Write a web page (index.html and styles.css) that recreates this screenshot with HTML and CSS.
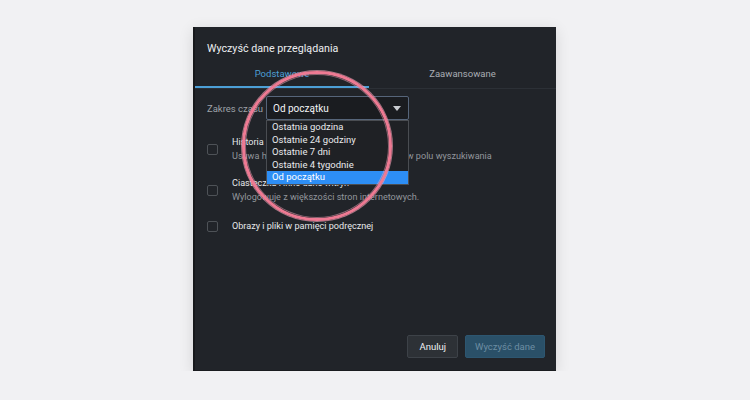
FILE: index.html
```html
<!DOCTYPE html>
<html lang="pl">
<head>
    <meta charset="UTF-8">
    <title>Wyczyść dane przeglądania</title>
    <link rel="stylesheet" href="styles.css">
</head>
<body>
<main class="scena">
    <section class="dialog">
        <h2 class="dialog-tytul">Wyczyść dane przeglądania</h2>
        <nav class="zakladki">
            <span class="zakladka aktywna">Podstawowe</span>
            <span class="zakladka">Zaawansowane</span>
        </nav>
        <div class="tresc">
            <div class="zakres">
                <span class="zakres-etykieta">Zakres czasu</span>
                <div class="wybor">
                    <div class="wybor-pole">
                        <span>Od początku</span>
                        <svg class="strzalka" width="8" height="5" viewBox="0 0 8 5"><path d="M0 0h8L4 5z" fill="#c9ccd1"/></svg>
                    </div>
                    <ul class="lista">
                        <li>Ostatnia godzina</li>
                        <li>Ostatnie 24 godziny</li>
                        <li>Ostatnie 7 dni</li>
                        <li>Ostatnie 4 tygodnie</li>
                        <li class="wybrany">Od początku</li>
                    </ul>
                </div>
            </div>
            <div class="opcja">
                <span class="pole"></span>
                <div>
                    <div class="opcja-nazwa">Historia przeglądania</div>
                    <div class="opcja-opis">Usuwa historię i autouzupełnienia adresów w polu wyszukiwania</div>
                </div>
            </div>
            <div class="opcja">
                <span class="pole"></span>
                <div>
                    <div class="opcja-nazwa">Ciasteczka i inne dane witryn</div>
                    <div class="opcja-opis">Wylogowuje z większości stron internetowych.</div>
                </div>
            </div>
            <div class="opcja ostatnia">
                <span class="pole"></span>
                <div>
                    <div class="opcja-nazwa">Obrazy i pliki w pamięci podręcznej</div>
                </div>
            </div>
        </div>
        <div class="przyciski">
            <button class="przycisk">Anuluj</button>
            <button class="przycisk glowny">Wyczyść dane</button>
        </div>
        <div class="kolko"></div>
    </section>
</main>
</body>
</html>
```

FILE: styles.css
```css
body{
    background-color: #f1f1f3;
    margin: 0;
    font-family: Roboto, "Noto Sans", sans-serif;
}
.scena{
    display: flex;
    padding: 27px 0 0 193px;
}
.dialog{
    position: relative;
    width: 363px;
    height: 344px;
    box-sizing: border-box;
    background-color: #212429;
    border-left: 2px solid #17191c;
    border-bottom: 1px solid #1a1c1f;
    box-shadow: 0 3px 14px rgba(0, 0, 0, .12);
    display: flex;
    flex-direction: column;
}
.dialog-tytul{
    margin: 0;
    padding: 15px 0 0 12px;
    height: 34px;
    box-sizing: border-box;
    font-size: 10.7px;
    font-weight: normal;
    color: #eceef0;
}
.zakladki{
    display: flex;
    border-bottom: 1px solid #2c3036;
}
.zakladka{
    flex: 1;
    text-align: center;
    font-size: 9.5px;
    color: #a9adb3;
    padding: 7px 0 7px;
    border-bottom: 2px solid transparent;
}
.zakladka.aktywna{
    flex: 0 0 174px;
    color: #4c9fd6;
    border-bottom-color: #4c9fd6;
}
.tresc{
    padding: 7px 12px 0;
    flex: 1;
}
.zakres{
    display: flex;
    align-items: center;
    font-size: 9.5px;
}
.zakres-etykieta{
    width: 59px;
    color: #9ea2a8;
}
.wybor{
    position: relative;
}
.wybor-pole{
    width: 143px;
    height: 24px;
    box-sizing: border-box;
    border: 1px solid #56657a;
    border-radius: 2px;
    background-color: #1a1c20;
    color: #f2f3f5;
    display: flex;
    align-items: center;
    justify-content: space-between;
    padding: 0 7px 0 6px;
    font-size: 10px;
}
.lista{
    position: absolute;
    top: 24px;
    left: 0;
    width: 143px;
    box-sizing: border-box;
    margin: 0;
    padding: 0;
    list-style: none;
    background-color: #1f2125;
    border: 1px solid #4a4d52;
    z-index: 2;
}
.lista li{
    height: 12.6px;
    line-height: 12.6px;
    padding-left: 5px;
    font-size: 9.5px;
    color: #e9eaec;
}
.lista li.wybrany{
    background-color: #2d8ef5;
    color: #ffffff;
}
.opcja{
    display: flex;
    align-items: center;
    gap: 14px;
    margin-top: 15px;
}
.opcja + .opcja{
    margin-top: 13px;
}
.opcja.ostatnia{
    margin-top: 15px;
}
.pole{
    width: 9px;
    height: 9px;
    border: 1px solid #4e5257;
    border-radius: 2px;
    flex-shrink: 0;
}
.opcja-nazwa{
    font-size: 9.1px;
    color: #e6e8ea;
    line-height: 14px;
}
.opcja-opis{
    font-size: 9.1px;
    color: #92969c;
    line-height: 14px;
}
.przyciski{
    display: flex;
    justify-content: flex-end;
    gap: 7px;
    padding: 0 11px 12px 0;
}
.przycisk{
    height: 23px;
    padding: 0 11px;
    white-space: nowrap;
    font-family: inherit;
    font-size: 9.5px;
    color: #eef0f2;
    background-color: #2d3136;
    border: 1px solid #3d4248;
    border-radius: 2px;
}
.przycisk.glowny{
    width: 80px;
    padding: 0;
    background-color: #2a5068;
    border-color: #2d5670;
    color: #6d8ea3;
}
.kolko{
    position: absolute;
    left: 47px;
    top: 44px;
    width: 144px;
    height: 144px;
    border: 3px solid #ee7a93;
    border-radius: 50%;
    box-shadow: 0 0 0 1px rgba(246, 170, 190, .6), inset 0 0 0 1px rgba(246, 170, 190, .5);
    z-index: 3;
    pointer-events: none;
}
```
